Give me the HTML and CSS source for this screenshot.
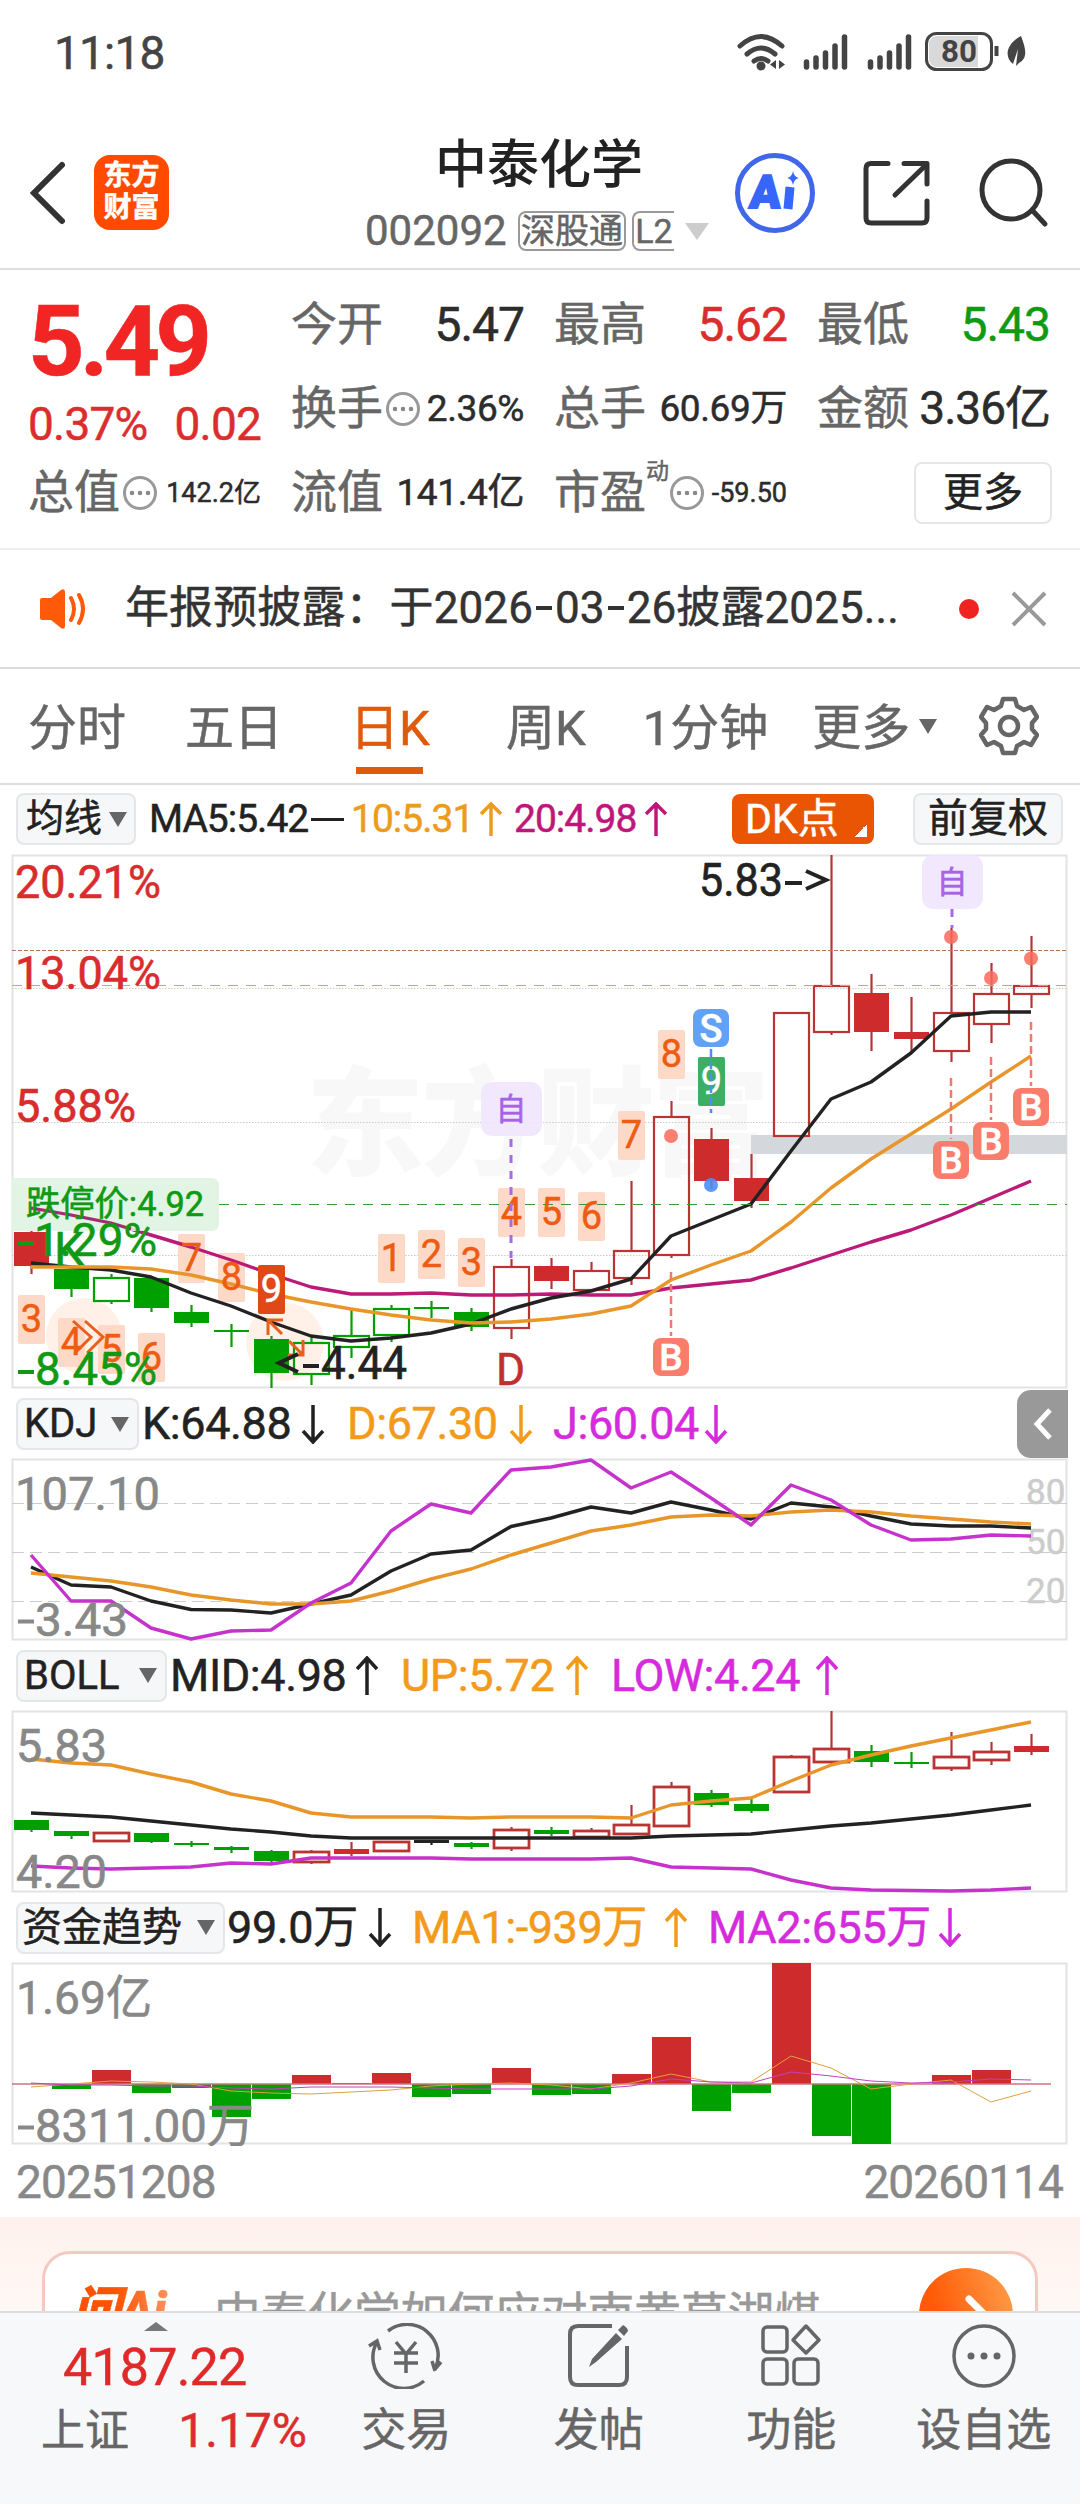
FILE: index.html
```html
<!DOCTYPE html>
<html lang="zh-CN">
<head>
<meta charset="utf-8">
<title>中泰化学 002092</title>
<link rel="stylesheet" href="styles.css">
</head>
<body>
<div class="phone">
  <div class="status">
    <span class="clock">11:18</span>
    <svg class="status-icons" width="292" height="44" viewBox="736 30 292 44">
      <g fill="none" stroke="#444" stroke-width="5" stroke-linecap="round">
        <path d="M740 46Q761 27 782 46"/><path d="M747 54Q761 42 775 54"/><path d="M754 61Q761 56 768 61"/>
      </g>
      <circle cx="761" cy="66" r="4.5" fill="#444"/>
      <path d="M776 60v9l-6-4.500zM779 60v9l6-4.500z" fill="#444"/>
      <g stroke="#444" stroke-width="5.500" stroke-linecap="round">
        <path d="M806.500 62v5M816 58v9M825.500 53v14M835 46v21M844.500 37v30"/>
        <path d="M870.500 62v5M880 58v9M889.500 53v14M899 46v21M908.500 37v30"/>
      </g>
      <rect x="926.500" y="33.500" width="65" height="36" rx="10" fill="#fff" stroke="#444" stroke-width="3"/>
      <path d="M937 36h41v31h-41a8 8 0 0 1-8-8V44a8 8 0 0 1 8-8z" fill="#d9d9d9"/>
      <text x="959" y="62" text-anchor="middle" font-size="32" font-weight="700" textLength="36" lengthAdjust="spacingAndGlyphs" fill="#444">80</text>
      <path d="M996.500 46v10" stroke="#444" stroke-width="4"/>
      <path d="M1021 36c5 13 7 22-2 27l-3 3 2-17-5 15c-9-7-7-20 8-28z" fill="#444"/>
    </svg>
  </div>

  <header class="header">
    <svg class="back" width="38" height="64" viewBox="0 0 38 64"><path d="M33 4L5 32L33 60" fill="none" stroke="#333" stroke-width="6" stroke-linecap="round"/></svg>
    <div class="logo"><span>东方</span><span>财富</span></div>
    <div class="heading">
      <h1>中泰化学</h1>
      <div class="sub"><span class="code">002092</span><span class="tag">深股通</span><span class="tag tag-cut">L2</span><i class="tri-gray"></i></div>
    </div>
    <svg class="tools" width="320" height="84" viewBox="734 151 320 84">
      <circle cx="775" cy="193" r="37.500" fill="#fff" stroke="#4067ea" stroke-width="5"/>
      <text x="749" y="208" font-size="46" font-weight="900" fill="#3666fa" stroke="#3666fa" stroke-width="2" textLength="31" lengthAdjust="spacingAndGlyphs" transform="skewX(-5) translate(18 0)">A</text>
      <path d="M790 187l-2 22" stroke="#3666fa" stroke-width="9"/>
      <path d="M793 171q1 6 6 7q-5 1-6 7q-1-6-6-7q5-1 6-7z" fill="#3666fa"/>
      <g fill="none" stroke="#333" stroke-width="5" stroke-linecap="round" stroke-linejoin="round">
        <path d="M888 163.500H871q-5 0-5 5V218q0 5 5 5h51q5 0 5-5v-17"/><path d="M904 163.500h23V184M927 164L895 195"/>
        <circle cx="1011" cy="190" r="29"/><path d="M1032 210l13 14"/>
      </g>
    </svg>
  </header>

  <section class="quote">
    <div class="col">
      <div class="price">5.49</div>
      <div class="change"><span>0.37%</span><span>0.02</span></div>
      <div class="cell last"><label>总值</label><i class="info"></i><b class="xs">142.2亿</b></div>
    </div>
    <div class="col">
      <div class="cell"><label>今开</label><b>5.47</b></div>
      <div class="cell"><label>换手</label><i class="info"></i><b class="sm">2.36%</b></div>
      <div class="cell"><label>流值</label><b class="sm">141.4亿</b></div>
    </div>
    <div class="col">
      <div class="cell"><label>最高</label><b class="red">5.62</b></div>
      <div class="cell"><label>总手</label><b class="sm">60.69万</b></div>
      <div class="cell"><label>市盈</label><sup>动</sup><i class="info"></i><b class="xs">-59.50</b></div>
    </div>
    <div class="col">
      <div class="cell"><label>最低</label><b class="green">5.43</b></div>
      <div class="cell"><label>金额</label><b class="md">3.36亿</b></div>
      <div class="cell"><button class="more">更多</button></div>
    </div>
  </section>

  <section class="notice">
    <svg width="52" height="44" viewBox="0 0 52 44"><path d="M3 13q0-2 2-2h9L24 3q4-2 4 2v34q0 4-4 2L14 33H5q-2 0-2-2z" fill="#ff5a0a"/><path d="M34 11q6 11 0 22M42 8q8 14 0 28" fill="none" stroke="#ff5a0a" stroke-width="4" stroke-linecap="round"/></svg>
    <p>年报预披露：于2026<em></em>03<em></em>26披露2025...</p>
    <i class="dot"></i>
    <svg class="close" width="36" height="36" viewBox="0 0 36 36"><path d="M2 2L34 34M34 2L2 34" stroke="#999" stroke-width="4"/></svg>
  </section>

  <nav class="tabs">
    <a>分时</a><a>五日</a><a class="on">日K</a><a>周K</a><a>1分钟</a><a>更多</a><i class="tri"></i>
    <svg width="60" height="60" viewBox="-30 -30 60 60"><path d="M-6-27H6L8-20L15-16L22-19L28-9L23-3V3L28 9L22 19L15 16L8 20L6 27H-6L-8 20L-15 16L-22 19L-28 9L-23 3V-3L-28-9L-22-19L-15-16L-8-20Z" fill="none" stroke="#666" stroke-width="4.500" stroke-linejoin="round"/><circle r="9" fill="none" stroke="#666" stroke-width="4.500"/></svg>
  </nav>

  <div class="legend legend-ma">
    <button class="pick">均线<i class="tri"></i></button>
    <span class="v ma5">MA5:5.42</span><i class="flat"></i>
    <span class="v ma10">10:5.31<svg class="arr" width="24" height="34" viewBox="0 0 24 34"><path d="M12 34V3M2 12L12 2L22 12"/></svg></span>
    <span class="v ma20">20:4.98<svg class="arr" width="24" height="34" viewBox="0 0 24 34"><path d="M12 34V3M2 12L12 2L22 12"/></svg></span>
    <button class="dk">DK点</button>
    <button class="pick fq">前复权</button>
  </div>

  <svg class="chart" width="1080" height="538" viewBox="0 853 1080 538">
    <text x="306" y="1166" font-size="118" font-weight="900" fill="#f8f8f8" textLength="464">东方财富</text>
    <rect x="12.500" y="855.500" width="1054" height="532" fill="none" stroke="#e3e3e3" stroke-width="2"/>
    <path d="M12 988.500H1067M12 1122.500H1067M12 1255.500H1067" stroke="#ccc" stroke-dasharray="1.500 1.500"/>
    <rect x="751" y="1135" width="316" height="19" fill="#d4d7dc"/>
    <circle cx="84" cy="1336" r="38" fill="#fff0e8"/><circle cx="285" cy="1342" r="39" fill="#fff0e8"/>
    <g id="kBoxes"></g>
    <g id="kCandles"></g>
    <g id="kLines"></g>
    <path d="M12 950.500H1067" stroke="#b8764f" stroke-dasharray="4 2"/>
    <path d="M12 985.500H1067" stroke="#c2a883" stroke-dasharray="10 8"/>
    <path d="M12 1178H211q8 0 8 8v37q0 8-8 8H12z" fill="#dff3e1" fill-opacity=".9"/>
    <path d="M31 1208L71 1215L111 1223L131 1229" fill="none" stroke="#a92a74" stroke-width="3"/>
    <path d="M219 1204.500H1067" stroke="#3a9a3a" stroke-width="1.200" stroke-dasharray="10 8"/>
    <g id="kTags"></g>
    <g fill="none" stroke="#e8601c" stroke-width="3"><path d="M73 1321L91 1337L75 1353M85 1321L103 1337L87 1353"/><path d="M283 1320H268V1335M268 1320L282 1334M303 1340V1355H288M303 1355L289 1341"/></g>
    <g fill="#d92c2c" stroke="#d92c2c" stroke-width=".6" font-size="46">
      <text x="15" y="898" textLength="146" lengthAdjust="spacingAndGlyphs">20.21%</text>
      <text x="15" y="989" textLength="146" lengthAdjust="spacingAndGlyphs">13.04%</text>
      <text x="15" y="1122" textLength="121" lengthAdjust="spacingAndGlyphs">5.88%</text>
    </g>
    <g fill="#109a14" stroke="#109a14" stroke-width=".6" font-size="46">
      <text x="26" y="1216" font-size="35" textLength="178" lengthAdjust="spacingAndGlyphs">跌停价:4.92</text>
      <text x="34" y="1256" textLength="123" lengthAdjust="spacingAndGlyphs">1.29%</text><path d="M18 1243h16" stroke-width="4"/>
      <text x="54" y="1265" textLength="30" lengthAdjust="spacingAndGlyphs">K</text>
      <text x="35" y="1385" textLength="122" lengthAdjust="spacingAndGlyphs">8.45%</text><path d="M18 1372h16" stroke-width="4"/>
    </g>
    <text x="496" y="1385" font-size="45" fill="#c03030" stroke="#c03030" stroke-width=".6" textLength="29" lengthAdjust="spacingAndGlyphs">D</text>
    <g fill="#222" stroke="#222" stroke-width=".6" font-size="46">
      <text x="699" y="896" textLength="84" lengthAdjust="spacingAndGlyphs">5.83</text><path d="M785 883h17M806 871l20 9-20 9" fill="none" stroke-width="4"/>
      <text x="321" y="1379" textLength="86" lengthAdjust="spacingAndGlyphs">4.44</text><path d="M303 1366h16M298 1354l-19 9 19 9" fill="none" stroke-width="4"/>
    </g>
  </svg>

  <div class="legend legend-kdj">
    <button class="pick">KDJ<i class="tri"></i></button>
    <span class="v k">K:64.88<svg class="arr" width="24" height="39" viewBox="0 0 24 39"><path d="M12 0V36M2 26L12 37L22 26"/></svg></span>
    <span class="v d">D:67.30<svg class="arr" width="24" height="39" viewBox="0 0 24 39"><path d="M12 0V36M2 26L12 37L22 26"/></svg></span>
    <span class="v j">J:60.04<svg class="arr" width="24" height="39" viewBox="0 0 24 39"><path d="M12 0V36M2 26L12 37L22 26"/></svg></span>
    <span class="drawer"><svg width="20" height="34" viewBox="0 0 20 34"><path d="M17 3L4 17L17 31" fill="none" stroke="#fff" stroke-width="5"/></svg></span>
  </div>
  <svg class="chart" width="1080" height="185" viewBox="0 1457 1080 185">
    <rect x="12.500" y="1459.500" width="1054" height="180" fill="none" stroke="#e3e3e3" stroke-width="2"/>
    <path d="M12 1503.500H1067M12 1552.500H1067M12 1601.500H1067" stroke="#ccc" stroke-dasharray="12 6"/>
    <g fill="#ccc" stroke="#ccc" stroke-width=".5" font-size="35"><text x="1026" y="1504">80</text><text x="1026" y="1554">50</text><text x="1026" y="1603">20</text></g>
    <g id="kdj"></g>
    <g fill="#888" stroke="#888" stroke-width=".6" font-size="47"><text x="15" y="1510" textLength="145" lengthAdjust="spacingAndGlyphs">107.10</text><text x="35" y="1636" textLength="93" lengthAdjust="spacingAndGlyphs">3.43</text><path d="M18 1621.500h16" stroke-width="4"/></g>
  </svg>

  <div class="legend legend-boll">
    <button class="pick">BOLL<i class="tri"></i></button>
    <span class="v mid">MID:4.98<svg class="arr" width="24" height="39" viewBox="0 0 24 39"><path d="M12 39V3M2 13L12 2L22 13"/></svg></span>
    <span class="v up">UP:5.72<svg class="arr" width="24" height="39" viewBox="0 0 24 39"><path d="M12 39V3M2 13L12 2L22 13"/></svg></span>
    <span class="v low">LOW:4.24<svg class="arr" width="24" height="39" viewBox="0 0 24 39"><path d="M12 39V3M2 13L12 2L22 13"/></svg></span>
  </div>
  <svg class="chart" width="1080" height="185" viewBox="0 1709 1080 185">
    <rect x="12.500" y="1711.500" width="1054" height="180" fill="none" stroke="#e3e3e3" stroke-width="2"/>
    <g id="bCandles"></g><g id="bLines"></g>
    <g fill="#888" stroke="#888" stroke-width=".6" font-size="47"><text x="16" y="1762" textLength="91" lengthAdjust="spacingAndGlyphs">5.83</text><text x="16" y="1888" textLength="91" lengthAdjust="spacingAndGlyphs">4.20</text></g>
  </svg>

  <div class="legend legend-fund">
    <button class="pick">资金趋势<i class="tri"></i></button>
    <span class="v f0">99.0万<svg class="arr" width="24" height="39" viewBox="0 0 24 39"><path d="M12 0V36M2 26L12 37L22 26"/></svg></span>
    <span class="v f1">MA1:-939万<svg class="arr" width="24" height="39" viewBox="0 0 24 39"><path d="M12 39V3M2 13L12 2L22 13"/></svg></span>
    <span class="v f2">MA2:655万<svg class="arr" width="24" height="39" viewBox="0 0 24 39"><path d="M12 0V36M2 26L12 37L22 26"/></svg></span>
  </div>
  <svg class="chart" width="1080" height="185" viewBox="0 1961 1080 185">
    <rect x="12.500" y="1963.500" width="1054" height="180" fill="none" stroke="#e3e3e3" stroke-width="2"/>
    <g id="fund"></g>
    <g fill="#888" stroke="#888" stroke-width=".6" font-size="47"><text x="16" y="2014" textLength="136" lengthAdjust="spacingAndGlyphs">1.69亿</text><text x="35" y="2142" textLength="219" lengthAdjust="spacingAndGlyphs">8311.00万</text><path d="M18 2127.500h16" stroke-width="4"/></g>
  </svg>
  <div class="dates"><span>20251208</span><span>20260114</span></div>

  <section class="ask">
    <div class="ask-box">
      <span class="ask-logo">问Ai</span>
      <span class="ask-text">中泰化学如何应对南黄草湖煤</span>
      <svg class="go" width="94" height="94" viewBox="0 0 94 94"><defs><linearGradient id="g" x1="0" y1=".6" x2="1" y2=".3"><stop offset=".2" stop-color="#ff5a05"/><stop offset="1" stop-color="#ff9a45"/></linearGradient></defs><circle cx="47" cy="47" r="47" fill="url(#g)"/><path d="M50 31L66 47L50 63" fill="none" stroke="#fff" stroke-width="7" stroke-linecap="round"/></svg>
    </div>
  </section>

  <footer class="bar">
    <div class="index">
      <i class="tri-up"></i>
      <div class="index-val">4187.22</div>
      <div class="index-row"><span>上证</span><span class="red">1.17%</span></div>
    </div>
    <div class="item"><svg width="76" height="66" viewBox="-38 -33 76 66"><g fill="none" stroke="#666" stroke-width="3.500"><path d="M-18-25A31 31 0 0 1 29 13M29 13l6-7M29 15l-3-10"/><path d="M18 25A31 31 0 0 1-29-14M-37-10l8-5 3 9"/><path d="M-10-14L0-2L10-14M0-2V17M-12-3H12M-12 7H12"/></g></svg><span>交易</span></div>
    <div class="item"><svg width="76" height="66" viewBox="-38 -33 76 66"><path d="M13-30H-21q-8 0-8 8V21q0 8 8 8H20q8 0 8-8V-10" fill="none" stroke="#666" stroke-width="4"/><path d="M17-23l6 6L-3 6l-7 5 3-8zM19-26l5-5q5 3 5 6l-4 5z" fill="#666"/></svg><span>发帖</span></div>
    <div class="item"><svg width="76" height="66" viewBox="-38 -33 76 66"><g fill="none" stroke="#666" stroke-width="3.500" stroke-linejoin="round"><rect x="-28" y="-29" width="24" height="25" rx="4"/><rect x="-28" y="3" width="24" height="25" rx="4"/><rect x="3" y="3" width="24" height="25" rx="4"/><path d="M15-30L28-16L15-3L2-16Z"/></g></svg><span>功能</span></div>
    <div class="item"><svg width="76" height="66" viewBox="-38 -33 76 66"><circle r="30" fill="none" stroke="#666" stroke-width="3.500"/><circle cx="-13" r="3.500" fill="#666"/><circle r="3.500" fill="#666"/><circle cx="13" r="3.500" fill="#666"/></svg><span>设自选</span></div>
  </footer>
</div>
<script src="script.js"></script>
</body>
</html>
```
FILE: styles.css
```css
* { box-sizing: border-box; }
body { margin: 0; background: #fff; font-family: Roboto, "Noto Sans CJK SC", sans-serif; line-height: 1.2; color: #222; -webkit-text-stroke: .5px; }
svg { display: block; flex: none; }
svg text { font-family: Roboto, "Noto Sans CJK SC", sans-serif; }
button { font: inherit; padding: 0; margin: 0; }
i { font-style: normal; }
.phone { width: 1080px; height: 2504px; overflow: hidden; display: flex; flex-direction: column; }
.phone > * { flex: none; }
.red { color: #dc2d2d !important; }
.green { color: #109a14 !important; }

.status { height: 134px; display: flex; align-items: flex-start; justify-content: space-between; padding: 30px 52px 0 54px; }
.clock { font-size: 46px; line-height: 46px; color: #444; letter-spacing: -.8px; }

.header { height: 136px; display: flex; align-items: flex-start; border-bottom: 2px solid #ddd; }
.back { margin: 27px 0 0 29px; }
.logo { width: 75px; height: 75px; margin: 21px 0 0 27px; padding-top: 5px; border-radius: 16px; background: #ff4a00; color: #fff; font-size: 28px; font-weight: 700; line-height: 32px; text-align: center; display: flex; flex-direction: column; }
.heading { width: 565px; }
.heading h1 { margin: 2px 0 0 266px; font-size: 52px; font-weight: 500; line-height: 60px; white-space: nowrap; -webkit-text-stroke: 0; }
.sub { margin: 14px 0 0 196px; height: 42px; display: flex; align-items: center; color: #666; }
.code { font-size: 42px; width: 144px; }
.tag { height: 40px; width: 108px; margin-left: 9px; border: 2px solid #999; border-radius: 8px; font-size: 34px; line-height: 36px; text-align: center; white-space: nowrap; }
.tag-cut { width: 42px; margin-left: 6px; border-right: 0; border-radius: 8px 0 0 8px; }
.tri-gray { margin-left: 11px; border: 12px solid transparent; border-top: 17px solid #ccc; border-bottom: 0; }
.tools { margin-top: 17px; }

.quote { height: 280px; display: flex; gap: 30px; padding: 13px 29px 0 28px; border-bottom: 2px solid #eee; }
.col { width: 233px; }
.price { height: 105px; font-size: 99px; font-weight: 700; line-height: 117px; letter-spacing: -5px; color: #f22525; }
.change { height: 72px; display: flex; justify-content: space-between; font-size: 46px; line-height: 72px; letter-spacing: -.8px; color: #dc2d2d; }
.cell { height: 84px; display: flex; align-items: center; white-space: nowrap; }
.cell.last { height: 66px; }
.cell label { font-size: 46px; color: #666; }
.cell b { margin-left: auto; font-size: 48px; font-weight: 400; letter-spacing: -1px; color: #2c2c2c; }
.cell b.md { font-size: 46px; }
.cell b.sm { font-size: 37px; letter-spacing: -.4px; }
.cell b.xs { font-size: 27px; letter-spacing: 0; }
.cell sup { align-self: flex-start; font-size: 23px; line-height: 30px; color: #666; margin-top: 6px; }
.info { flex: none; width: 34px; height: 34px; margin-left: 3px; border: 3px solid #999; border-radius: 50%; background: radial-gradient(circle, #888 2px, transparent 2.600px) 0 50% / 8px 8px; background-clip: content-box; padding: 10px 2px; background-position: center; }
sup + .info { margin-left: 1px; }
.more { margin-left: auto; width: 138px; height: 62px; margin-right: -2px; border: 2px solid #e6e6e6; border-radius: 8px; background: #fff; font-size: 40px; line-height: 56px; color: #222; }

.notice { height: 119px; display: flex; align-items: center; padding-left: 37px; border-bottom: 2px solid #ddd; }
.notice p { margin: 0 0 0 36px; width: 834px; font-size: 44px; white-space: nowrap; color: #333; letter-spacing: .1px; }
.notice em { display: inline-block; width: 16px; height: 4px; margin: 0 3px 13px; background: #333; }
.dot { width: 20px; height: 20px; border-radius: 50%; background: #f02323; }
.close { margin-left: 32px; }

.tabs { height: 116px; display: flex; align-items: center; padding-left: 28px; border-bottom: 2px solid #ddd; font-size: 49px; color: #666; white-space: nowrap; }
.tabs a { height: 100%; line-height: 119px; }
.tabs a + a { margin-left: 59px; }
.tabs a.on { margin-left: 67px; color: #e05a0a; width: 82px; background: linear-gradient(#e05a0a, #e05a0a) 6px 98px / 67px 7px no-repeat; }
.tabs a.on + a { margin-left: 74px; }
.tabs a:nth-child(5) { margin-left: 57px; }
.tabs a:nth-child(6) { margin-left: 44px; }
.tri { display: inline-block; border: 9px solid transparent; border-top: 15px solid #666; border-bottom: 0; }
.tabs .tri { margin-left: 9px; }
.tabs svg { margin-left: 42px; }

.legend { display: flex; align-items: center; padding-left: 16px; height: 67px; font-size: 45px; white-space: nowrap; }
.legend-ma { height: 68px; font-size: 39px; }
.legend-kdj { height: 66px; }
.pick { height: 52px; flex: none; display: flex; align-items: center; justify-content: space-between; padding: 0 8px 0 6px; border: 2px solid #e4e6e9; border-radius: 8px; background: #f6f7f9; color: #222; font-size: 40px; }
.v { flex: none; display: flex; align-items: center; justify-content: space-between; letter-spacing: -.4px; }
.arr path { fill: none; stroke: currentColor; stroke-width: 3.500; }
.legend-ma .pick { width: 120px; font-size: 38px; padding: 0 7px 0 8px; }
.legend-ma .v { letter-spacing: -1px; }
.ma5 { margin-left: 13px; width: 162px; }
.flat { width: 33px; height: 3px; background: #222; margin-right: 7px; }
.ma10 { width: 152px; color: #ee9a1c; }
.ma20 { width: 154px; margin-left: 11px; color: #c0167c; }
.dk { width: 142px; height: 50px; margin-left: 64px; padding-left: 13px; border: 0; border-radius: 8px; background: linear-gradient(135deg, transparent 50%, #fff 50%) 122px 30px / 13px 13px no-repeat #ea5504; color: #fff; font-size: 41px; text-align: left; line-height: 50px; }
.legend-ma .fq { width: 150px; margin-left: 39px; padding: 0; justify-content: center; font-size: 40px; }

.legend-kdj .pick { width: 123px; }
.k { width: 183px; margin-left: 3px; }
.d { width: 186px; margin-left: 22px; color: #f39a1a; }
.j { width: 175px; margin-left: 20px; color: #d52bdc; }
.drawer { width: 51px; height: 68px; margin-left: auto; margin-right: 12px; border-radius: 14px 0 0 14px; background: #999; display: flex; align-items: center; justify-content: center; }

.legend-boll .pick { width: 151px; }
.mid { width: 209px; margin-left: 3px; }
.up { width: 188px; margin-left: 22px; color: #f39a1a; }
.low { width: 228px; margin-left: 22px; color: #d52bdc; }

.legend-fund .pick { width: 209px; padding-left: 4px; }
.f0 { width: 165px; margin-left: 2px; }
.f1 { width: 276px; margin-left: 20px; color: #f39a1a; }
.f2 { width: 254px; margin-left: 20px; color: #d52bdc; }

.dates { height: 71px; display: flex; justify-content: space-between; padding: 0 17px 0 16px; font-size: 46px; line-height: 72px; color: #888; letter-spacing: -.9px; }

.ask { height: 94px; overflow: hidden; background: linear-gradient(#fff1ec, #fff8f5); padding: 34px 42px 0; }
.ask-box { height: 128px; display: flex; align-items: center; border: 3px solid #f5c9c0; border-radius: 28px; background: #fff; padding: 0 22px 0 27px; white-space: nowrap; }
.ask-logo { width: 142px; margin-top: -8px; font-size: 49px; font-weight: 900; font-style: italic; background: linear-gradient(90deg, #ff5200 40%, #ffa070 100%) 0 0 / 108px 100%; -webkit-background-clip: text; background-clip: text; color: transparent; }
.ask-text { font-size: 46.700px; color: #999; }
.go { margin-left: auto; }

.bar { height: 193px; display: flex; border-top: 2px solid #ddd; background: #f7f8fa; color: #666; }
.index { width: 310px; display: flex; flex-direction: column; align-items: flex-start; }
.tri-up { margin: 9px 0 0 144px; border: 12px solid transparent; border-bottom: 9px solid #777; border-top: 0; }
.index-val { margin: 7px 0 0 63px; font-size: 52px; line-height: 60px; letter-spacing: -.8px; color: #e02a2a; }
.index-row { width: 266px; display: flex; justify-content: space-between; font-size: 44px; line-height: 46px; margin: 10px 0 0 41px; }
.index-row .red { font-size: 48px; }
.item { width: 192.500px; display: flex; flex-direction: column; align-items: center; padding-top: 10px; font-size: 45px; white-space: nowrap; }
.item span { line-height: 50px; margin-top: 17px; }
```
FILE: script.js
```js
const X = i => 31 + 40 * i;
const RED = '#ce2c2c', GREEN = '#00a000', LINE_RED = '#bb3434';

// Rows: colour (r/g/k), hollow flag, body top, body bottom, wick top, wick bottom
const daily = [
  ['r',0,1232,1266,1231,1274],['g',0,1269,1289,1269,1297],['g',1,1277,1301,1274,1304],['g',0,1278,1308,1278,1312],
  ['g',0,1312,1323,1305,1327],['g',0,1330,1332,1324,1347],['g',0,1339,1373,1336,1388],['g',1,1342,1374,1337,1385],
  ['g',1,1335,1347,1310,1358],['g',1,1308,1335,1305,1342],['g',0,1307,1309,1301,1318],['g',0,1312,1327,1308,1331],
  ['r',1,1266,1328,1259,1339],['r',0,1266,1281,1258,1289],['r',1,1270,1290,1262,1292],['r',1,1250,1278,1181,1285],
  ['r',1,1116,1255,1101,1258],['r',0,1139,1181,1128,1189],['r',0,1178,1201,1154,1208],['r',1,1012,1136,1012,1136],
  ['r',1,985,1032,855,1035],['r',0,993,1032,974,1051],['r',0,1032,1039,997,1052],['r',1,1012,1051,928,1062],
  ['r',1,993,1024,963,1043],['r',1,985,994,936,1008]];
const boll = [
  ['g',0,1820,1830,1820,1832],['g',0,1831,1836,1831,1839],['r',1,1832,1841,1832,1841],['g',0,1833,1842,1833,1843],
  ['g',0,1843,1845,1841,1847],['g',0,1847,1850,1846,1853],['g',0,1851,1861,1850,1864],['r',1,1851,1862,1850,1864],
  ['r',0,1849,1854,1842,1856],['r',1,1841,1851,1841,1852],['k',0,1840,1843,1840,1845],['g',0,1843,1847,1842,1849],
  ['r',1,1829,1848,1827,1851],['g',0,1830,1834,1827,1836],['r',1,1830,1837,1828,1838],['r',1,1824,1834,1805,1835],
  ['r',1,1786,1826,1782,1827],['g',0,1793,1805,1790,1807],['g',0,1804,1811,1797,1813],['r',1,1756,1792,1755,1793],
  ['r',1,1748,1762,1711,1764],['g',0,1751,1762,1745,1767],['g',0,1762,1764,1752,1768],['r',1,1756,1768,1732,1771],
  ['r',1,1751,1760,1742,1765],['r',0,1746,1752,1734,1755]];

const put = (id, s) => { document.getElementById(id).innerHTML += s; };
const rect = (x, y, w, h, fill, more = '') => `<rect x="${x}" y="${y}" width="${w}" height="${h}" fill="${fill}" ${more}/>`;
const poly = (ys, color, w = 3.4) => `<polyline points="${ys.map((y, i) => X(i) + ',' + y).join(' ')}" fill="none" stroke="${color}" stroke-width="${w}" stroke-linejoin="round"/>`;
const vline = (x, a, b, color, w = 2.2, dash = '') => `<path d="M${x} ${a}V${b}" stroke="${color}" stroke-width="${w}" stroke-dasharray="${dash}"/>`;
const glyph = (x, y, t, size, fill, w = 400) => `<text x="${x}" y="${y}" text-anchor="middle" font-size="${size}" font-weight="${w}" fill="${fill}" stroke="${fill}" stroke-width=".5">${t}</text>`;

function candles(id, rows, pen) {
  rows.forEach(([c, hollow, t, b, wt, wb], i) => {
    const x = X(i) + .5, fill = { r: RED, g: GREEN, k: '#222' }[c], edge = c === 'r' ? LINE_RED : fill;
    put(id, hollow
      ? vline(x, wt, t, edge) + vline(x, b, wb, edge) + rect(x - 17.5, t + 1, 35, b - t - 1, 'none', `stroke="${edge}" stroke-width="${pen}"`)
      : vline(x, wt, wb, edge) + rect(x - 17.5, t, 35, b - t, fill));
  });
}

candles('kCandles', daily, 2.2);
put('kLines', poly([1208,1215,1223,1235,1247,1260,1274,1287,1294,1294,1293,1295,1295,1294,1295,1295,1288,1284,1280,1268,1255,1242,1230,1215,1198,1181], '#bb1a78')
  + poly([1263,1267,1270,1277,1293,1306,1322,1336,1341,1338,1333,1324,1309,1298,1291,1279,1236,1220,1204,1151,1099,1082,1053,1016,1012,1012], '#222')
  + poly([1267,1267,1267,1269,1275,1284,1294,1302,1309,1315,1320,1323,1322,1319,1314,1306,1280,1265,1251,1222,1188,1159,1134,1109,1082,1056], '#e8962a'));

// Sequence counters: bar index, digit, top
[[0,3,1295],[1,4,1318],[2,5,1325],[3,6,1333],[4,7,1234],[5,8,1253],[9,1,1234],[10,2,1230],[11,3,1238],[12,4,1188],[13,5,1188],[14,6,1192],[15,7,1111],[16,8,1030]]
  .forEach(([i, d, y]) => {
    put('kBoxes', rect(X(i) - 13, y, 27, 49, '#ffd9c8', 'rx="2"'));
    put('kTags', glyph(X(i) + .5, y + 37, d, 38, '#ee5c12'));
  });
[[6,1265,'#e04818'],[17,1057,'#3fae63']].forEach(([i, y, c]) =>
  put('kTags', rect(X(i) - 13, y, 27, 49, c, 'rx="2"') + glyph(X(i) + .5, y + 37, 9, 38, '#fff')));

[[16,1272,1338],[23,1078,1141],[24,1057,1122],[25,1022,1088]].forEach(([i, from, y]) =>
  put('kTags', vline(X(i), from, y - 2, '#ee7a6c', 2.5, '8 4') + rect(X(i) - 18, y, 36, 38, '#fa7c6c', 'rx="8"') + glyph(X(i), y + 32, 'B', 37, '#fff', 500)));
[[16,1136],[23,937],[24,978],[25,958.5]].forEach(([i, y]) =>
  put('kTags', `<circle cx="${X(i)}" cy="${y}" r="7" fill="#fa6a5a" fill-opacity=".85"/>`));
put('kTags', rect(693, 1009, 36, 38, '#61a1f8', 'rx="8"') + glyph(711, 1042, 'S', 38, '#fff', 500)
  + vline(711, 1049, 1113, '#4a90f0', 2.5, '8 4') + '<circle cx="711" cy="1185" r="7" fill="#4a8ff5" fill-opacity=".9"/>');
[[511,1082,1139,1258],[952,855,909,928]].forEach(([x, y, a, b]) =>
  put('kTags', rect(x - 30, y, 61, 54, '#f1e6fe', 'rx="11" fill-opacity=".9"') + glyph(x, y + 38, '自', 31, '#a763e6')
    + vline(x, a, b, '#a46be6', 3, '8 8')));

put('kdj', poly([1567,1585,1587,1601,1609.5,1610,1613,1604,1595,1571,1554,1550,1526.5,1518,1507,1513,1502,1510,1519,1503,1507,1516,1524,1526,1526,1528], '#222')
  + poly([1573,1577,1581,1587,1595,1600,1604,1604,1601,1591,1579,1569,1555,1543,1531,1525,1517,1515,1516,1512,1510,1512,1516,1519,1522,1524], '#e8962a')
  + poly([1555,1601,1601,1628,1639,1631,1630,1603,1583,1531,1504,1513,1470,1467,1460,1488,1472,1498,1525,1485,1500,1525,1540,1539,1535,1536], '#c632cc'));

candles('bCandles', boll, 2.8);
put('bLines', poly([1813,1815,1817,1821,1825,1829,1832,1836,1838,1838,1838,1838,1838,1838,1838,1838,1836,1835,1834,1830,1826,1823,1819,1815,1810,1805], '#222')
  + poly([1759,1763,1765,1774,1782,1794,1801,1813,1817,1817,1817,1818,1817,1817,1817,1818,1805,1801,1798,1781,1765,1755,1746,1738,1730,1722], '#e8962a')
  + poly([1866,1868,1869,1868,1867,1863,1864,1858,1858,1858,1858,1859,1859,1859,1859,1858,1867,1868,1869,1880,1888,1890,1890.5,1891,1890,1888], '#c632cc'));

// Net inflow: y of the bar's far end, measured from the zero line
[0,2089,2070,2093,2088,2117,2099,2075,2083,2073,2097,2094,2068,2095,2094,2074,2037,2111,2093,1963,2136,2144,0,2075,2070,0]
  .forEach((y, i) => {
    if (!y) return;
    put('fund', y < 2084 ? rect(X(i) - 19, y, 39, 2084 - y, RED) : rect(X(i) - 19, 2084, 39, y - 2084, GREEN));
  });
put('fund', '<path d="M12 2084H1051" stroke="#c8767e" stroke-width="1.5"/>'
  + poly([2087,2084,2081,2082,2084,2091,2093,2094,2092,2090,2086,2084,2083,2085,2089,2083,2074,2082,2082,2056,2068,2089,2084,2080,2102,2091], '#e0a040', 1)
  + poly([2083,2085,2085,2086,2086,2088,2089,2087,2087,2087,2088,2089,2089,2089,2089,2086,2079,2082,2083,2072,2076,2081,2083,2082,2079,2080], '#c040c0', 1));
```
